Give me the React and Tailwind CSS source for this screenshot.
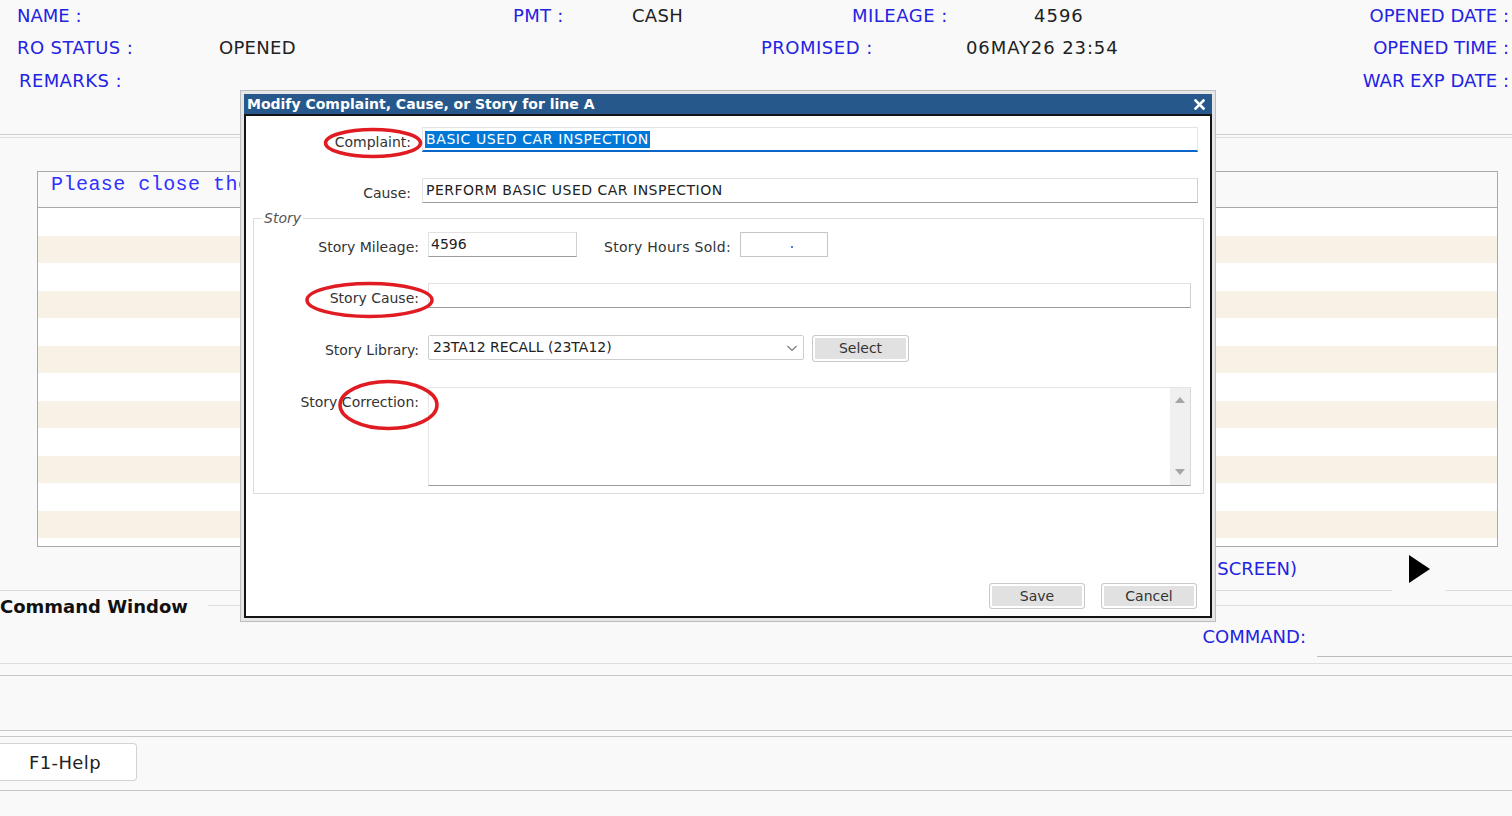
import React from "react";

const LABEL = "text-[#2323e2]";

function Field({ className = "", children }) {
  return (
    <div
      className={
        "h-[25px] border border-[#e2e2e2] border-r-[#d0d0d0] border-b-[#9c9c9c] bg-white flex items-center " +
        className
      }
    >
      {children}
    </div>
  );
}

function Label({ children, className = "" }) {
  return (
    <div className={"w-[165px] shrink-0 text-right text-[14px] leading-[18px] text-[#333] pt-[4px] " + className}>
      {children}
    </div>
  );
}

function GrayButton({ children, className = "" }) {
  return (
    <div
      className={
        "flex items-center justify-center rounded-[3px] border border-[#c9c9c9] bg-[#e1e1e1] shadow-[inset_0_0_0_2px_#ffffff] text-[14px] text-[#333] " +
        className
      }
    >
      {children}
    </div>
  );
}

function StoryDialog() {
  return (
    <div className="absolute left-[240px] top-[90px] w-[976px] h-[532px] border border-[#bdbdbd] bg-[#e6e6e6] p-[3px] flex flex-col">
      {/* title bar */}
      <div className="h-[20px] shrink-0 bg-[#27588c] flex items-center justify-between pl-[3px] pr-[7px]">
        <span className="text-white font-bold text-[14px] leading-none">
          Modify Complaint, Cause, or Story for line A
        </span>
        <svg width="11" height="11" viewBox="0 0 11 11">
          <path d="M1.5 1.5L9.5 9.5M9.5 1.5L1.5 9.5" stroke="#ffffff" strokeWidth="2.6" strokeLinecap="square" />
        </svg>
      </div>

      {/* body */}
      <div className="flex-1 border-2 border-[#141414] bg-white flex flex-col">
        <div className="mt-[11px] flex items-center">
          <Label>Complaint:</Label>
          <div className="ml-[11px] w-[776px] h-[25px] border border-[#e4e4e4] border-b-2 border-b-[#0a67c9] bg-white flex items-center pl-[2px]">
            <span className="bg-[#0078d7] text-white text-[14px] leading-[17px] tracking-[0.6px] px-[1px]">
              BASIC USED CAR INSPECTION
            </span>
          </div>
        </div>

        <div className="mt-[26px] flex items-center">
          <Label>Cause:</Label>
          <Field className="ml-[11px] w-[776px] pl-[3px]">
            <span className="text-[14px] tracking-[0.5px] text-[#222]">PERFORM BASIC USED CAR INSPECTION</span>
          </Field>
        </div>

        <fieldset className="mt-[6px] ml-[7px] w-[951px] border border-[#dcdcdc] pb-[7px]">
          <legend className="ml-[8px] px-[2px] italic text-[14px] leading-[18px] text-[#555]">Story</legend>

          <div className="mt-[5px] flex items-center">
            <Label>Story Mileage:</Label>
            <Field className="ml-[9px] w-[149px] pl-[2px]">
              <span className="text-[14px] text-[#222]">4596</span>
            </Field>
            <div className="ml-[27px] w-[127px] text-[14px] leading-[18px] text-[#333] pt-[4px] tracking-[0.3px]">
              Story Hours Sold:
            </div>
            <div className="ml-[9px] w-[88px] h-[25px] border border-[#c6c6c6] bg-white flex items-center pl-[50px] pt-[4px]">
              <div className="w-[2px] h-[2px] bg-[#3d7fd6]" />
            </div>
          </div>

          <div className="mt-[26px] flex items-center">
            <Label>Story Cause:</Label>
            <Field className="ml-[9px] w-[763px]" />
          </div>

          <div className="mt-[27px] flex items-start">
            <Label className="pt-[6px]">Story Library:</Label>
            <div className="ml-[9px] w-[376px] h-[25px] border border-[#cdcdcd] rounded-[2px] bg-white flex items-center justify-between pl-[4px] pr-[4px]">
              <span className="text-[14px] text-[#222]">23TA12 RECALL (23TA12)</span>
              <svg width="14" height="14" viewBox="0 0 14 14">
                <path d="M2.5 5l4.5 4.5L11.5 5" fill="none" stroke="#7a7a7a" strokeWidth="1.2" />
              </svg>
            </div>
            <GrayButton className="ml-[8px] w-[97px] h-[27px]">Select</GrayButton>
          </div>

          <div className="mt-[25px] flex items-start">
            <Label className="pt-[6px]">Story Correction:</Label>
            <div className="ml-[9px] w-[763px] h-[99px] border border-[#e6e6e6] border-b-[#9c9c9c] border-r-[#d8d8d8] bg-white flex justify-end">
              <div className="w-[20px] h-full bg-[#f0f0f0] flex flex-col items-center justify-between pt-[9px] pb-[10px]">
                <svg width="10" height="6" viewBox="0 0 10 6">
                  <path d="M0 6L5 0L10 6Z" fill="#a6a6a6" />
                </svg>
                <svg width="10" height="6" viewBox="0 0 10 6">
                  <path d="M0 0L10 0L5 6Z" fill="#a6a6a6" />
                </svg>
              </div>
            </div>
          </div>
        </fieldset>

        <div className="flex-1" />

        <div className="flex justify-end gap-[16px] pr-[13px] pb-[7px]">
          <GrayButton className="w-[96px] h-[26px]">Save</GrayButton>
          <GrayButton className="w-[96px] h-[26px]">Cancel</GrayButton>
        </div>
      </div>
    </div>
  );
}

function Marks() {
  return (
    <svg className="absolute left-0 top-0 pointer-events-none" width="1512" height="816" viewBox="0 0 1512 816">
      <g fill="none" stroke="#e11b22" strokeWidth="3.5">
        <ellipse cx="373" cy="143" rx="47.5" ry="13.5" />
        <ellipse cx="369.5" cy="300" rx="62.5" ry="16.5" />
        <ellipse cx="388.5" cy="405" rx="48.5" ry="23.5" />
      </g>
    </svg>
  );
}

export default function App() {
  const rows = Array.from({ length: 12 }, (_, i) => i);
  return (
    <div className="relative w-[1512px] h-[816px] overflow-hidden bg-[#f9f9f9] font-['DejaVu_Sans',sans-serif] text-[#222]">
      {/* repair order header */}
      <div className="h-[135px] border-b border-[#cfcfcf] text-[18px]">
        <div className="flex h-[32px] leading-[32px]">
          <span className={"pl-[17px] w-[513px] " + LABEL}>NAME :</span>
          <span className={"w-[119px] tracking-[0.3px] " + LABEL}>PMT :</span>
          <span className="w-[220px] tracking-[0.3px]">CASH</span>
          <span className={"w-[182px] tracking-[0.5px] " + LABEL}>MILEAGE :</span>
          <span className="flex-1 tracking-[1px]">4596</span>
          <span className={"pr-[3px] " + LABEL}>OPENED DATE :</span>
        </div>
        <div className="flex h-[32px] leading-[32px]">
          <span className={"pl-[17px] w-[219px] tracking-[0.4px] " + LABEL}>RO STATUS :</span>
          <span className="w-[542px] tracking-[0.3px]">OPENED</span>
          <span className={"w-[205px] tracking-[0.5px] " + LABEL}>PROMISED :</span>
          <span className="flex-1 tracking-[0.9px]">06MAY26 23:54</span>
          <span className={"pr-[3px] " + LABEL}>OPENED TIME :</span>
        </div>
        <div className="flex h-[33px] leading-[33px]">
          <span className={"pl-[19px] flex-1 tracking-[0.4px] " + LABEL}>REMARKS :</span>
          <span className={"pr-[3px] " + LABEL}>WAR EXP DATE :</span>
        </div>
      </div>
      <div className="mt-[1px] border-b border-[#e0e0e0] h-[2px]" />

      {/* line list */}
      <div className="mt-[33px] ml-[37px] w-[1461px] border border-[#a9a9a9] bg-white">
        <div className="h-[36px] bg-[#f9f9f9] border-b border-[#a9a9a9] pl-[13px] pt-[1px]">
          <span className="font-['Liberation_Mono',monospace] text-[20px] leading-[20px] tracking-[0.46px] text-[#3030ff]">
            Please close the window to continue
          </span>
        </div>
        <div className="h-[338px]">
          {rows.map((i) => (
            <div key={i} className={i % 2 === 0 ? "h-[27.5px] bg-white" : "h-[27.5px] bg-[#f7f1e6]"} />
          ))}
        </div>
      </div>

      {/* paging row */}
      <div className="flex h-[44px]">
        <div className="flex-1 border-b border-[#dadada] flex items-center justify-end pr-[95px] text-[18px]">
          <span className={LABEL}>(F8 - NEXT SCREEN)</span>
        </div>
        <div className="w-[54px] flex items-center justify-center">
          <svg width="21" height="28" viewBox="0 0 21 28">
            <path d="M0 0L21 14L0 28Z" fill="#000000" />
          </svg>
        </div>
        <div className="w-[66px] border-b border-[#dadada]" />
      </div>

      {/* command window */}
      <fieldset className="mt-[1px] border-y border-x-0 border-[#dedede] pb-[6px]">
        <legend className="pr-[20px] pt-[4px] text-[18px] leading-[22px] font-bold text-[#111]">Command Window</legend>
        <div className="flex justify-end items-start">
          <span className={"mt-[8px] text-[18px] leading-[22px] " + LABEL}>COMMAND:</span>
          <div className="ml-[11px] w-[195px] h-[39px] border-b border-[#bdbdbd]" />
        </div>
      </fieldset>

      <div className="mt-[11px] h-[56px] border-y border-[#c7c7c7]" />
      <div className="mt-[5px] h-[55px] border-y border-[#c7c7c7] pt-[6px]">
        <div className="w-[137px] h-[38px] bg-white border border-l-0 border-[#d3d3d3] rounded-r-[4px] flex items-center justify-center pr-[6px] text-[18px] text-[#222] tracking-[0.4px]">
          F1-Help
        </div>
      </div>

      <StoryDialog />
      <Marks />
    </div>
  );
}
